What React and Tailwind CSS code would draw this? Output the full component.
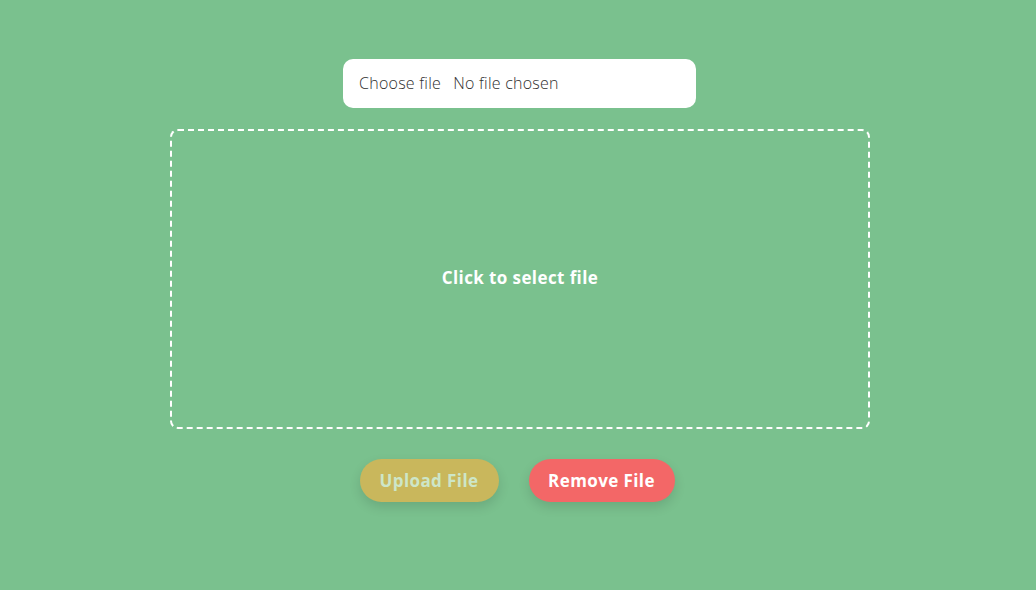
export default function App() {
  return (
    <div className="min-h-[590px] w-full bg-[#7ac18e] flex flex-col items-center pt-[59px] font-['Open_Sans',sans-serif]">
      <div className="ml-[3px] w-[353px] h-[49px] bg-white rounded-[10px] flex items-center px-[16px] pb-[1px] text-[16px] text-[#2f2f2f] font-light tracking-[0.25px]">
        <span>Choose file</span>
        <span className="ml-[12px]">No file chosen</span>
      </div>
      <div className="ml-[4px] mt-[21px] w-[700px] h-[300px] border-2 border-dashed border-white rounded-[8px] flex items-center justify-center">
        <span className="text-white font-bold text-[17px] tracking-[0.4px] mb-[2px]">Click to select file</span>
      </div>
      <div className="-ml-[2px] mt-[30px] flex gap-[30px]">
        <button className="h-[43px] w-[139px] rounded-full bg-[#c9b75c] text-[#cde6c8] font-bold text-[17px] tracking-[0.4px] shadow-[0_5px_12px_rgba(0,0,0,0.12)]">
          Upload File
        </button>
        <button className="h-[43px] w-[146px] rounded-full bg-[#f36767] text-white font-bold text-[17px] tracking-[0.4px] shadow-[0_5px_12px_rgba(0,0,0,0.12)]">
          Remove File
        </button>
      </div>
    </div>
  );
}
